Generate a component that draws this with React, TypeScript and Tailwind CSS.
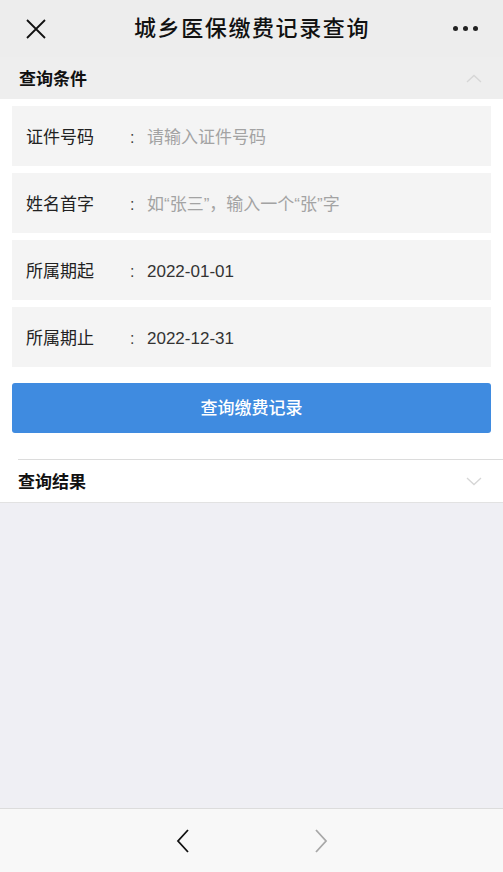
const font = { fontFamily: '"Liberation Sans", "Noto Sans CJK SC", sans-serif' };

const fields = [
  { label: "证件号码", value: "请输入证件号码", placeholder: true },
  { label: "姓名首字", value: "如“张三”，输入一个“张”字", placeholder: true },
  { label: "所属期起", value: "2022-01-01", placeholder: false },
  { label: "所属期止", value: "2022-12-31", placeholder: false },
];

function Chevron({ up }: { up?: boolean }) {
  return (
    <svg width="16" height="9" viewBox="0 0 16 9">
      <path d={up ? "M1 8 L8 1.5 L15 8" : "M1 1 L8 7.5 L15 1"} stroke="#d6d6d6" strokeWidth="1.3" fill="none" />
    </svg>
  );
}

export default function App() {
  return (
    <div className="w-[503px] h-[872px] flex flex-col bg-[#efeff4]" style={font}>
      {/* top bar */}
      <div className="h-[57px] bg-[#ededed] flex items-center justify-between px-[25px] shrink-0">
        <svg width="22" height="22" viewBox="0 0 22 22">
          <path d="M2 2 L20 20 M20 2 L2 20" stroke="#111" strokeWidth="1.8" />
        </svg>
        <div className="text-[22px] font-medium text-[#111] tracking-[1.6px] pl-[4px]">城乡医保缴费记录查询</div>
        <div className="flex gap-[5px] items-center">
          <span className="w-[5px] h-[5px] rounded-full bg-[#222]" />
          <span className="w-[5px] h-[5px] rounded-full bg-[#222]" />
          <span className="w-[5px] h-[5px] rounded-full bg-[#222]" />
        </div>
      </div>

      <div className="bg-white flex flex-col">
        <div className="h-[42px] bg-[#eeeeee] flex items-center justify-between pl-[19px] pr-[21px]">
          <span className="text-[17px] font-bold text-[#111] pt-[3px]">查询条件</span>
          <Chevron up />
        </div>

        <div className="flex flex-col gap-[7px] px-[12px] pt-[7px]">
          {fields.map((f) => (
            <div key={f.label} className="h-[60px] bg-[#f4f4f4] flex items-center pl-[14px] pt-[3px]">
              <span className="w-[104px] text-[17px] text-[#222]">{f.label}</span>
              <span className="w-[17px] text-[16px] text-[#444]">:</span>
              <span className={`text-[17px] ${f.placeholder ? "text-[#a3a3a3]" : "text-[#333]"}`}>{f.value}</span>
            </div>
          ))}
        </div>

        <div className="px-[12px] pt-[16px] pb-[26px]">
          <div className="h-[50px] rounded-[3px] bg-[#3f8be0] flex items-center justify-center text-white text-[17px] font-medium pt-[2px]">
            查询缴费记录
          </div>
        </div>

        <div className="ml-[18px] border-t border-[#dcdcdc] h-[43px] flex items-center justify-between pr-[21px]">
          <span className="text-[17px] font-bold text-[#111] pt-[3px]">查询结果</span>
          <Chevron />
        </div>
      </div>
      <div className="h-px bg-[#e2e2e2]" />

      <div className="flex-1" />

      {/* bottom bar */}
      <div className="h-[64px] bg-[#f8f8f8] border-t border-[#dcdcdc] flex items-center justify-center gap-[124px] shrink-0">
        <svg width="14" height="24" viewBox="0 0 14 24">
          <path d="M12 1 L2 12 L12 23" stroke="#111" strokeWidth="1.8" fill="none" />
        </svg>
        <svg width="14" height="24" viewBox="0 0 14 24">
          <path d="M2 1 L12 12 L2 23" stroke="#a8a8a8" strokeWidth="1.8" fill="none" />
        </svg>
      </div>
    </div>
  );
}
